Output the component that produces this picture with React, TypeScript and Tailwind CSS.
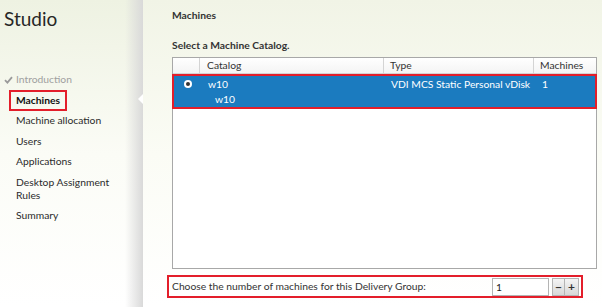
const steps = [
  { label: 'Machine allocation' },
  { label: 'Users' },
  { label: 'Applications' },
  { label: 'Desktop Assignment Rules' },
  { label: 'Summary' },
];

function Sidebar() {
  return (
    <aside className="relative w-[143px] shrink-0 bg-gradient-to-b from-[#eef2e2] via-[#fbfcf6] to-white">
      <div className="absolute inset-y-0 right-0 w-[18px] bg-gradient-to-r from-transparent to-[#d9d9d9]" />
      <div className="absolute right-0 top-[94px] h-0 w-0 border-y-[5px] border-r-[5px] border-y-transparent border-r-white" />
      <h1 className="pl-[4px] pt-[7px] text-[19px] leading-[24px] text-[#262626]">Studio</h1>
      <ul className="mt-[42px] flex flex-col gap-[7.5px] text-[10.3px] leading-[13px] text-[#2b2b2b]">
        <li className="flex items-center gap-[3px] pl-[4px] text-[#a0a0a0]">
          <svg width="9" height="8" viewBox="0 0 9 8">
            <path d="M1 4.2 L3.4 6.6 L8 1.2" fill="none" stroke="#9a9a9a" strokeWidth="1.8" />
          </svg>
          <span>Introduction</span>
        </li>
        <li className="pl-[9px]">
          <span className="-my-[4px] inline-block border-2 border-[#e31e2a] px-[5px] py-[2px] font-bold text-[#111]">
            Machines
          </span>
        </li>
        {steps.map((s) => (
          <li key={s.label} className="w-[112px] pl-[16px]">
            {s.label}
          </li>
        ))}
      </ul>
    </aside>
  );
}

function MachineTable() {
  return (
    <div className="mt-[4px] mr-[5px] flex h-[212px] flex-col border border-[#a8a8a8] bg-white">
      <div className="flex h-[16px] border-b border-[#d4d4d4] bg-gradient-to-b from-white to-[#f4f4f4] text-[10.3px] leading-[15px] text-[#333]">
        <div className="w-[27px] border-r border-[#d4d4d4]" />
        <div className="w-[184px] border-r border-[#d4d4d4] pl-[7px]">Catalog</div>
        <div className="w-[150px] border-r border-[#d4d4d4] pl-[6px]">Type</div>
        <div className="flex-1 pl-[6px]">Machines</div>
      </div>
      <div className="-mx-px flex h-[35px] border-2 border-[#e31e2a] bg-[#1b7bbf] text-[10.3px] leading-[15px] text-white">
        <div className="flex w-[27px] justify-center pt-[4px]">
          <span className="flex h-[8px] w-[8px] items-center justify-center rounded-full bg-white">
            <span className="h-[4px] w-[4px] rounded-full bg-[#333]" />
          </span>
        </div>
        <div className="w-[184px] pl-[7px] pt-[1px]">
          <div>w10</div>
          <div className="pl-[7px]">w10</div>
        </div>
        <div className="w-[150px] pl-[6px] pt-[1px]">VDI MCS Static Personal vDisk</div>
        <div className="flex-1 pl-[7px] pt-[1px]">1</div>
      </div>
    </div>
  );
}

export default function App() {
  return (
    <div className="flex h-[307px] w-[602px] overflow-hidden bg-white font-['Lato',sans-serif]">
      <Sidebar />
      <main className="flex-1 bg-gradient-to-b from-[#f1f4e6] via-[#fbfcf5] to-white pl-[29px]">
        <h2 className="pt-[7px] text-[10.3px] leading-[16px] font-bold text-[#333]">Machines</h2>
        <p className="mt-[14px] text-[10.3px] leading-[16px] font-bold text-[#333]">Select a Machine Catalog.</p>
        <MachineTable />
        <div className="mt-[6px] -ml-[5px] flex h-[23px] w-[416px] items-center border-2 border-[#e31e2a] pl-[3px] text-[10.3px] text-[#333]">
          <span className="flex-1">Choose the number of machines for this Delivery Group:</span>
          <input
            readOnly
            value="1"
            className="h-[18px] w-[57px] border border-[#b4b4b4] bg-white px-[3px] text-[10.3px] text-[#222] outline-none"
          />
          <div className="ml-[3px] mr-[2px] flex">
            <button className="flex h-[18px] w-[13px] items-center justify-center border border-[#b4b4b4] bg-gradient-to-b from-[#f4f4f4] to-[#d8d8d8] text-[12px] leading-none font-bold text-[#333]">
              −
            </button>
            <button className="flex h-[18px] w-[14px] items-center justify-center border border-l-0 border-[#b4b4b4] bg-gradient-to-b from-[#f4f4f4] to-[#d8d8d8] text-[12px] leading-none font-bold text-[#333]">
              +
            </button>
          </div>
        </div>
      </main>
    </div>
  );
}
